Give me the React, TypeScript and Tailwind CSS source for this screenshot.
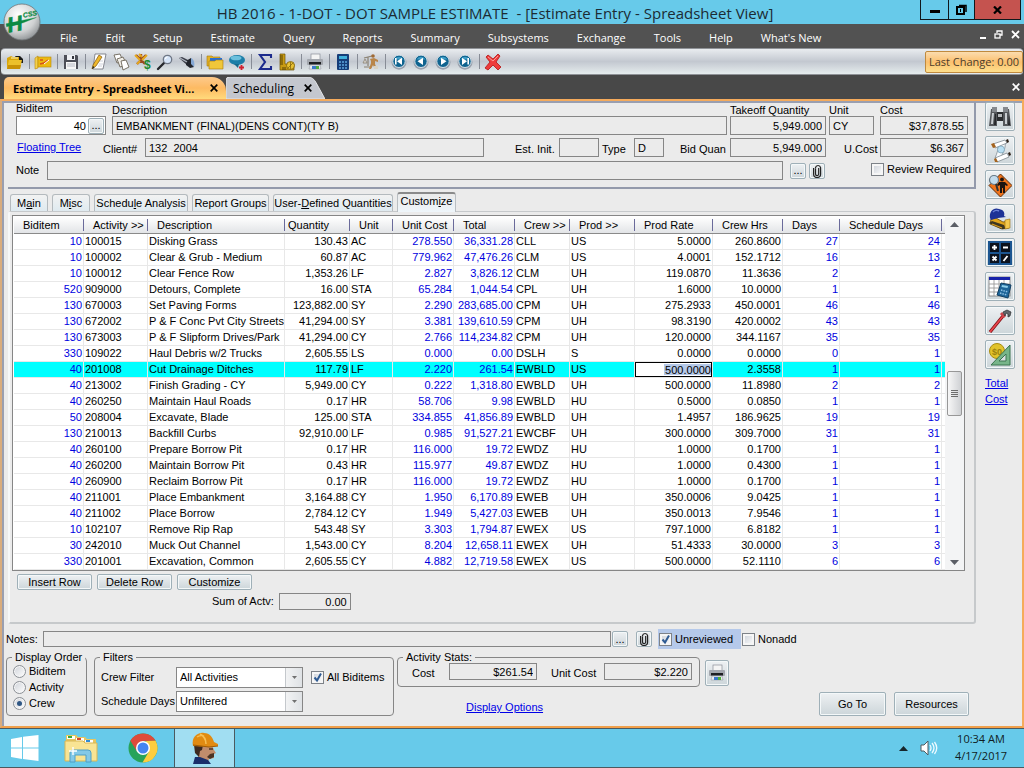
import React from "react";

type Kids = { children: React.ReactNode };

/* ---------- small drawing helper ---------- */

function Pic({ size = 18, box = 18, children }: Kids & { size?: number; box?: number }) {
  return (
    <svg width={size} height={size} viewBox={`0 0 ${box} ${box}`} aria-hidden="true" className="shrink-0">
      {children}
    </svg>
  );
}

function Clip() {
  return (
    <svg width="10" height="14" viewBox="0 0 10 14" fill="none" stroke="#222" strokeWidth="1.2" aria-hidden="true">
      <path d="M6.7 4v6a1.6 1.6 0 0 1-3.2 0V4.4" />
      <path d="M1.6 4v6a3.5 3.5 0 0 0 7 0V3.6a2.6 2.6 0 0 0-5.1 0v1" />
    </svg>
  );
}

const folder = (
  <Pic>
    <path d="M9 3h5l3 3v4h-3z" fill="#1b1b1b" />
    <path d="M1 5l4-2 2 1h6v12H1z" fill="#d9a50a" />
    <path d="M1 16L3 7h13l-2 9z" fill="#ecc02a" />
    <path d="M1 16l1-4h13l-1 4z" fill="#c99206" />
    <path d="M5 5h7" stroke="#f8e7a0" strokeWidth="1.200" />
  </Pic>
);
const yellowBook = (
  <Pic>
    <path d="M1 5l3-2v12l-3 1z" fill="#f2d14e" stroke="#b8860b" strokeWidth=".6" />
    <rect x="4" y="4" width="13" height="10" fill="#ecb913" stroke="#b98a09" strokeWidth=".6" />
    <path d="M6 7h3M6 11l4-1 4-3" stroke="#d8501b" strokeWidth="1.4" fill="none" />
    <path d="M10 11l5-4" stroke="#fff" strokeWidth="1" />
  </Pic>
);
const floppy = (
  <Pic>
    <path d="M2 2h13l1 1v13H2z" fill="#4d4f58" />
    <rect x="5" y="2" width="8" height="5" fill="#eef0f4" />
    <rect x="10" y="3" width="2" height="3" fill="#34363e" />
    <rect x="4" y="9" width="10" height="7" fill="#f7f7f7" />
    <path d="M5 11h8M5 13h8" stroke="#b6bac4" strokeWidth="1" />
  </Pic>
);
const pencilPage = (
  <Pic>
    <path d="M5 1h11l-3 15H3z" fill="#fff" stroke="#6c6f78" strokeWidth=".8" />
    <path d="M9 8h4M9 11h4M8 13h4" stroke="#c3c7d2" strokeWidth=".8" />
    <path d="M9 2l3 2-6 9-4 3 1-4z" fill="#efb82b" stroke="#80560d" strokeWidth=".7" />
    <path d="M2 16l1-3 1.600 1.200z" fill="#222" />
  </Pic>
);
const copies = (
  <Pic>
    <path d="M2 2l6-1 3 7-6 2z" fill="#fff" stroke="#6b6457" strokeWidth=".9" />
    <path d="M5 6l6-2 4 8-7 2z" fill="#f1eee8" stroke="#6b6457" strokeWidth=".9" />
    <path d="M9 8l5-1 3 7-6 3z" fill="#fff" stroke="#6b6457" strokeWidth=".9" />
  </Pic>
);
const toolsDollar = (
  <Pic>
    <path d="M2 2l9 9M12 2L3 11M7 1v9" stroke="#9a4a22" strokeWidth="2.4" />
    <path d="M1 2l5 5M13 2L8 7M5 1l3 3M3 11l3-3" stroke="#e6a91f" strokeWidth="1.900" />
    <text x="10" y="16" fontSize="12" fontWeight="700" fill="#1b8a2f" fontFamily="Liberation Sans, sans-serif">$</text>
  </Pic>
);
const magnifier = (
  <Pic>
    <path d="M2 16l6-6" stroke="#26282e" strokeWidth="2.4" strokeLinecap="round" />
    <circle cx="11.500" cy="6.500" r="4.200" fill="#d5e4f8" stroke="#6f7785" strokeWidth="1.300" />
    <path d="M9.500 6a2 2 0 0 1 2-2" stroke="#fff" strokeWidth="1.100" fill="none" />
  </Pic>
);
const flashlight = (
  <Pic>
    <path d="M1 5l3-1 8 4-3 4z" fill="#3a3d47" />
    <path d="M8 8l5-3 3 9-4 1-4-3z" fill="#22252d" />
    <path d="M13 5c3 1 4 6 3 9l-3-3z" fill="#86a9d6" />
    <path d="M2 5l7 4" stroke="#b2b8c4" strokeWidth="1.200" />
  </Pic>
);
const folders = (
  <Pic>
    <path d="M1 3h5l1 1h7v9H1z" fill="#e3b124" stroke="#a77a0a" strokeWidth=".6" />
    <path d="M4 5h12v3H4z" fill="#2c6fd0" />
    <path d="M3 8h6l1-1h7v9H3z" fill="#f0c73a" stroke="#a77a0a" strokeWidth=".6" />
  </Pic>
);
const balloon = (
  <Pic>
    <ellipse cx="9" cy="7" rx="8" ry="5" fill="#1c7ea8" />
    <ellipse cx="8" cy="5" rx="5.500" ry="2.300" fill="#6cc0dd" />
    <path d="M6 11h5l-1 4z" fill="#16698d" />
    <path d="M13.500 12v5M11 14.500h5" stroke="#d1202f" strokeWidth="1.800" />
  </Pic>
);
const sigma = (
  <Pic>
    <path d="M15 5V2H4l5 7-5 7h11v-3" fill="none" stroke="#1c2b8d" strokeWidth="2.100" />
  </Pic>
);
const ruler = (
  <Pic>
    <path d="M2 1h5v10h9v6H2z" fill="#c99b12" stroke="#6e5406" strokeWidth=".7" />
    <path d="M2 3h3M2 5h3M2 7h3M2 9h3M2 11h3M5 17v-3M7 17v-3" stroke="#4a3903" strokeWidth=".9" />
    <circle cx="12.500" cy="12.500" r="4" fill="#e7c133" stroke="#7a5d07" strokeWidth=".8" />
    <path d="M10 15l5-5M12.500 9v7" stroke="#7a5d07" strokeWidth=".7" />
  </Pic>
);
const printer = (
  <Pic>
    <rect x="5" y="1" width="9" height="6" fill="#f4f4f4" stroke="#8b8f98" strokeWidth=".7" />
    <rect x="1" y="6" width="16" height="6" rx="1" fill="#a3a7ae" />
    <rect x="3" y="9" width="12" height="2.500" fill="#1d1e21" />
    <path d="M4 12h10l1 4H3z" fill="#e9ecf0" stroke="#8b8f98" strokeWidth=".5" />
    <rect x="6" y="13" width="4" height="3" fill="#3a78c9" />
    <rect x="10" y="13" width="3" height="3" fill="#4fae3c" />
  </Pic>
);
const calculator = (
  <Pic>
    <rect x="3" y="1" width="12" height="16" rx="1" fill="#163d78" />
    <rect x="5" y="3" width="8" height="3" fill="#3fb0dc" />
    <path d="M5 9h2M8 9h2M11 9h2M5 12h2M8 12h2M11 12h2M5 15h2M8 15h2M11 15h2" stroke="#5da5dd" strokeWidth="1.700" />
  </Pic>
);
const scale = (
  <Pic>
    <path d="M2 5l8-2M6 4v9M2 14h8" stroke="#8a8172" strokeWidth="1.200" />
    <path d="M1 10l2-4 2 4z" fill="#d9d6cf" stroke="#8a8172" strokeWidth=".8" />
    <circle cx="11" cy="3" r="1.800" fill="#a06a35" />
    <path d="M8 6l4-1 4 2v2l-3-1v3l2 5h-2l-2-4-2 4H7l2-6V8z" fill="#b98549" />
    <path d="M12 13h4v3h-4z" fill="#d8d2c4" />
  </Pic>
);
const redX = (
  <Pic>
    <path d="M2 4l2-2 5 4 5-5 2 2-4 6 5 5-3 3-5-5-5 5-3-2 5-6z" fill="#ee3c3c" stroke="#b41414" strokeWidth=".8" />
    <path d="M4 4l5 4 5-5" stroke="#ff9a94" strokeWidth="1" fill="none" />
  </Pic>
);

function Nav({ glyph }: { glyph: string }) {
  return (
    <Pic>
      <ellipse cx="9" cy="9.500" rx="7.500" ry="7.200" fill="#9aa2ae" />
      <circle cx="9" cy="8.300" r="6.200" fill="#0f638f" stroke="#e3ecf2" strokeWidth=".9" />
      <path d="M4.500 6.500a5 5 0 0 1 9 0z" fill="#3d9cc6" />
      <path d={glyph} fill="#fff" />
    </Pic>
  );
}

type Tool = { name: string; icon: React.ReactNode } | null;
const tools: Tool[] = [
  { name: "Open", icon: folder },
  null,
  { name: "Estimate book", icon: yellowBook },
  null,
  { name: "Save", icon: floppy },
  null,
  { name: "Edit", icon: pencilPage },
  { name: "Copy", icon: copies },
  { name: "Cost tools", icon: toolsDollar },
  { name: "Find", icon: magnifier },
  { name: "Search", icon: flashlight },
  null,
  { name: "Folders", icon: folders },
  { name: "Notes", icon: balloon },
  null,
  { name: "Sum", icon: sigma },
  { name: "Takeoff", icon: ruler },
  null,
  { name: "Print", icon: printer },
  null,
  { name: "Calculator", icon: calculator },
  null,
  { name: "Balance", icon: scale },
  null,
  { name: "First", icon: <Nav glyph="M5 5h1.600v6.500H5zM7 8.300l5-3.600v7.200z" /> },
  { name: "Previous", icon: <Nav glyph="M5.500 8.300l5.500-3.600v7.200z" /> },
  { name: "Next", icon: <Nav glyph="M12.500 8.300L7 4.700v7.200z" /> },
  { name: "Last", icon: <Nav glyph="M13 5h-1.600v6.500H13zM11 8.300L6 4.700v7.200z" /> },
  null,
  { name: "Close", icon: redX },
];

const sideTools: { name: string; icon: React.ReactNode }[] = [
  {
    name: "Find",
    icon: (
      <Pic size={24} box={24}>
        <path d="M3 4h6v4h6V4h6l2 17h-8v-6H9v6H1z" fill="#55585c" />
        <path d="M4 2h5v5H4zM15 2h5v5h-5z" fill="#85898e" />
        <path d="M4 8l-1 11h2l1-11zM17 8v11h2V8z" fill="#c9cdd1" />
        <path d="M7 9h1v11H6zM21 10l1 10h-2z" fill="#25272a" />
        <path d="M9 7h6v9H9z" fill="#2b2d30" />
        <path d="M10 9h4v3h-4z" fill="#b7babd" />
      </Pic>
    ),
  },
  {
    name: "Plans",
    icon: (
      <Pic size={24} box={24}>
        <path d="M9 5l8-2c1 5-1 9-4 15l-6 1c2-5 4-9 2-14z" fill="#f7fbfd" stroke="#7d888f" strokeWidth=".8" />
        <path d="M5 5l12-4 2 3L7 9z" fill="#fff" stroke="#7d888f" strokeWidth=".8" />
        <path d="M7 19l12-5 2 4L9 23z" fill="#fff" stroke="#7d888f" strokeWidth=".8" />
        <path d="M3 5l3-1 2 4-3 1z" fill="#a5641f" />
        <path d="M6 20l2-1 2 4-3 0z" fill="#a5641f" />
        <path d="M18 1l2-1 1 3-2 1zM20 14l2-1 1 3-2 1z" fill="#2d2117" />
        <circle cx="13" cy="10.500" r="3.500" fill="#b9dff3" stroke="#7fa6ba" strokeWidth=".8" />
      </Pic>
    ),
  },
  {
    name: "Crew lookup",
    icon: (
      <Pic size={24} box={24}>
        <path d="M12.500 1L24 12.500 12.500 24 1 12.500z" fill="#f0731a" stroke="#5c2d0b" strokeWidth="1" />
        <circle cx="14" cy="6.500" r="1.900" fill="#1d1410" />
        <path d="M11 9h6l3 3-1 1-2-1v8h-2v-5h-1v5h-2v-8l-2 1-1-1z" fill="#1d1410" />
        <circle cx="6" cy="7" r="4.500" fill="#c3dced" stroke="#677986" strokeWidth="1.200" />
        <path d="M8 11l2 7" stroke="#333" strokeWidth="2" />
      </Pic>
    ),
  },
  {
    name: "Equipment",
    icon: (
      <Pic size={24} box={24}>
        <path d="M3 12l5-1 7 4 6-1v7l-7 1-12-5z" fill="#e2a51a" stroke="#6b4b08" strokeWidth=".8" />
        <path d="M1 16l12 6h5l-2-4-12-4z" fill="#3d3620" />
        <path d="M4 17l10 4" stroke="#d79b1b" strokeWidth="1.200" />
        <path d="M17 13l5-1v9l-5 1z" fill="#f4c94e" stroke="#9a7110" strokeWidth=".6" />
        <path d="M2 11C1 4 6 0 11 2c5 1 6 4 5 7l2 1-8 1-7 2z" fill="#1e3296" />
        <path d="M5 5c2-2 4-2 6-1" stroke="#6c80d8" strokeWidth="1.400" fill="none" />
      </Pic>
    ),
  },
  {
    name: "Operators",
    icon: (
      <Pic size={24} box={24}>
        <rect x="0" y="0" width="24" height="24" fill="#1c5590" />
        <path d="M2 2h9v9H2zM13 2h9v9h-9zM2 13h9v9H2zM13 13h9v9h-9z" fill="#0c121d" />
        <path d="M6.500 4v5M4 6.500h5M15 6.500h5M4.500 15.500l4 4M8.500 15.500l-4 4M19.500 15l-4 5" stroke="#fff" strokeWidth="1.800" />
      </Pic>
    ),
  },
  {
    name: "Spreadsheet calculator",
    icon: (
      <Pic size={24} box={24}>
        <rect x="1" y="2" width="21" height="19" fill="#fff" stroke="#777" strokeWidth=".8" />
        <rect x="1" y="2" width="21" height="3" fill="#1722a8" />
        <path d="M1 9h21M1 13h21M1 17h21M6 5v16M11 5v16M16 5v16" stroke="#9a9a9a" strokeWidth=".9" />
        <path d="M13 8l10 2-3 13-11-3z" fill="#1e6599" stroke="#123f62" />
        <path d="M14 10l6 1-.5 2-6-1z" fill="#8fd0ec" />
        <path d="M13 15l7 2M12 18l7 2" stroke="#8fc1e4" strokeWidth="1.500" strokeDasharray="1.500 1" />
      </Pic>
    ),
  },
  {
    name: "Wrench",
    icon: (
      <Pic size={24} box={24}>
        <path d="M2 23L15 7" stroke="#7a0d12" strokeWidth="3.200" />
        <path d="M2 23L15 7" stroke="#e9444b" strokeWidth="1.800" />
        <path d="M13 4l4 4" stroke="#c9444b" strokeWidth="3" />
        <path d="M15 3l4-2 4 2-1 4-2 1 0-3-2-1-1 3z" fill="#63676b" stroke="#2a2c2e" strokeWidth=".7" />
      </Pic>
    ),
  },
  {
    name: "Cost and takeoff",
    icon: (
      <Pic size={24} box={24}>
        <circle cx="9" cy="8" r="7.500" fill="#e1c32b" stroke="#a88d10" />
        <text x="4" y="12" fontSize="9" fontWeight="700" fill="#9b820e" fontFamily="Liberation Sans, sans-serif">$0</text>
        <path d="M22 2v20H3zM18 11v7h-7z" fill="#77b58a" fillRule="evenodd" stroke="#3c7550" strokeWidth="1" />
      </Pic>
    ),
  },
];

/* ---------- form controls ---------- */

const glossy = "border border-[#9fb0b8] rounded-[2px] bg-linear-to-b from-[#eef1f3] via-[#dde3e6] to-[#cdd6da] shadow-[inset_0_0_0_1px_#f4f8f9] hover:to-[#e6edf0]";

function Field({ id, label, value = "", className }: { id?: string; label?: string; value?: string; className: string }) {
  return (
    <input
      id={id}
      aria-label={label}
      readOnly
      defaultValue={value}
      className={`min-w-0 border border-[#868686] bg-[#ebebeb] px-[3px] ${className}`}
    />
  );
}

function Check({ label, checked = false }: { label: string; checked?: boolean }) {
  return (
    <label className="flex items-center gap-[3px] whitespace-nowrap">
      <span className="relative block size-[13px]">
        <input
          type="checkbox"
          defaultChecked={checked}
          className="peer block size-[13px] appearance-none border border-[#7d8288] bg-linear-to-br from-[#c9ced6] to-white shadow-[inset_0_0_0_2px_#f6f6f6]"
        />
        <svg viewBox="0 0 13 13" className="pointer-events-none absolute inset-0 size-[13px] opacity-0 peer-checked:opacity-100" aria-hidden="true">
          <path d="M3.500 6.500l2.500 3 4-7" fill="none" stroke="#2f5b93" strokeWidth="2" />
        </svg>
      </span>
      {label}
    </label>
  );
}

function Radio({ label, checked = false }: { label: string; checked?: boolean }) {
  return (
    <label className="flex h-4 items-center gap-[3px]">
      <span className="relative block size-[13px]">
        <input
          type="radio"
          name="order"
          defaultChecked={checked}
          className="peer block size-[13px] appearance-none rounded-full border border-[#8b9096] bg-linear-to-br from-[#cfd3d9] to-white shadow-[inset_0_0_0_1px_#f6f6f6]"
        />
        <span className="pointer-events-none absolute inset-1 rounded-full bg-[#2f5784] opacity-0 peer-checked:opacity-100" />
      </span>
      {label}
    </label>
  );
}

function Choice({ id, value }: { id: string; value: string }) {
  return (
    <span className="relative block h-[21px] w-[127px]">
      <select id={id} className="block h-full w-full appearance-none border border-[#868686] bg-white px-[3px]">
        <option>{value}</option>
      </select>
      <span className="pointer-events-none absolute inset-y-px right-px flex w-[17px] items-center justify-center border-l border-[#c4c8cc] bg-linear-to-r from-[#f2f3f4] to-[#dfe2e5]">
        <svg width="5" height="3" viewBox="0 0 5 3" aria-hidden="true">
          <path d="M0 0h5L2.500 3z" fill="#707070" />
        </svg>
      </span>
    </span>
  );
}

function SmallButton({ label, children }: Kids & { label: string }) {
  return (
    <button aria-label={label} className={`flex h-4 w-4 shrink-0 items-center justify-center ${glossy}`}>
      {children}
    </button>
  );
}

function Group({ title, className, children }: Kids & { title: string; className: string }) {
  return (
    <fieldset className={`min-w-0 rounded-[4px] border border-[#868686] ${className}`}>
      <legend className="ml-[5px] h-[11px] px-[3px] leading-[11px] whitespace-nowrap">{title}</legend>
      {children}
    </fieldset>
  );
}

/* ---------- data ---------- */

const columns: { title: string; width: string; pad: string; align: string; blue?: boolean }[] = [
  { title: "Biditem", width: "w-[70px]", pad: "pl-[9px]", align: "text-right", blue: true },
  { title: "Activity >>", width: "w-[64px]", pad: "pl-[9px]", align: "text-left" },
  { title: "Description", width: "w-[137px]", pad: "pl-[9px]", align: "text-left" },
  { title: "Quantity", width: "w-[65px]", pad: "pl-[3px]", align: "text-right" },
  { title: "Unit", width: "w-[43px]", pad: "pl-[9px]", align: "text-left" },
  { title: "Unit Cost", width: "w-[61px]", pad: "pl-[9px]", align: "text-right", blue: true },
  { title: "Total", width: "w-[61px]", pad: "pl-[9px]", align: "text-right", blue: true },
  { title: "Crew >>", width: "w-[55px]", pad: "pl-[9px]", align: "text-left" },
  { title: "Prod >>", width: "w-[65px]", pad: "pl-[9px]", align: "text-left" },
  { title: "Prod Rate", width: "w-[78px]", pad: "pl-[9px]", align: "text-right" },
  { title: "Crew Hrs", width: "w-[70px]", pad: "pl-[9px]", align: "text-right" },
  { title: "Days", width: "w-[57px]", pad: "pl-[9px]", align: "text-right", blue: true },
  { title: "Schedule Days", width: "w-[102px]", pad: "pl-[9px]", align: "text-right", blue: true },
];

const rows = [
  "10|100015|Disking Grass|130.43|AC|278.550|36,331.28|CLL|US|5.0000|260.8600|27|24",
  "10|100002|Clear & Grub - Medium|60.87|AC|779.962|47,476.26|CLM|US|4.0001|152.1712|16|13",
  "10|100012|Clear Fence Row|1,353.26|LF|2.827|3,826.12|CLM|UH|119.0870|11.3636|2|2",
  "520|909000|Detours, Complete|16.00|STA|65.284|1,044.54|CPL|UH|1.6000|10.0000|1|1",
  "130|670003|Set Paving Forms|123,882.00|SY|2.290|283,685.00|CPM|UH|275.2933|450.0001|46|46",
  "130|672002|P & F Conc Pvt City Streets|41,294.00|SY|3.381|139,610.59|CPM|UH|98.3190|420.0002|43|43",
  "130|673003|P & F Slipform Drives/Park|41,294.00|CY|2.766|114,234.82|CPM|UH|120.0000|344.1167|35|35",
  "330|109022|Haul Debris w/2 Trucks|2,605.55|LS|0.000|0.00|DSLH|S|0.0000|0.0000|0|1",
  "40|201008|Cut Drainage Ditches|117.79|LF|2.220|261.54|EWBLD|US|500.0000|2.3558|1|1",
  "40|213002|Finish Grading - CY|5,949.00|CY|0.222|1,318.80|EWBLD|UH|500.0000|11.8980|2|2",
  "40|260250|Maintain Haul Roads|0.17|HR|58.706|9.98|EWBLD|HU|0.5000|0.0850|1|1",
  "50|208004|Excavate, Blade|125.00|STA|334.855|41,856.89|EWBLD|UH|1.4957|186.9625|19|19",
  "130|210013|Backfill Curbs|92,910.00|LF|0.985|91,527.21|EWCBF|UH|300.0000|309.7000|31|31",
  "40|260100|Prepare Borrow Pit|0.17|HR|116.000|19.72|EWDZ|HU|1.0000|0.1700|1|1",
  "40|260200|Maintain Borrow Pit|0.43|HR|115.977|49.87|EWDZ|HU|1.0000|0.4300|1|1",
  "40|260900|Reclaim Borrow Pit|0.17|HR|116.000|19.72|EWDZ|HU|1.0000|0.1700|1|1",
  "40|211001|Place Embankment|3,164.88|CY|1.950|6,170.89|EWEB|UH|350.0006|9.0425|1|1",
  "40|211002|Place Borrow|2,784.12|CY|1.949|5,427.03|EWEB|UH|350.0013|7.9546|1|1",
  "10|102107|Remove Rip Rap|543.48|SY|3.303|1,794.87|EWEX|US|797.1000|6.8182|1|1",
  "30|242010|Muck Out Channel|1,543.00|CY|8.204|12,658.11|EWEX|UH|51.4333|30.0000|3|3",
  "330|201001|Excavation, Common|2,605.55|CY|4.882|12,719.58|EWEX|US|500.0000|52.1110|6|6",
].map((r) => r.split("|"));

const menus = ["File", "Edit", "Setup", "Estimate", "Query", "Reports", "Summary", "Subsystems", "Exchange", "Tools", "Help", "What's New"];

/* ---------- page sections ---------- */

function TitleBar() {
  return (
    <header className="relative">
      <div className="flex h-6 items-start bg-[#67caea]">
        <h1 className="flex-1 pl-[70px] text-center font-['Open_Sans','Noto_Sans',sans-serif] text-[15px] leading-[27px] whitespace-pre text-[#1c2b33]">
          HB 2016 - 1-DOT - DOT SAMPLE ESTIMATE  - [Estimate Entry - Spreadsheet View]
        </h1>
        <div className="mr-[3px] flex h-5 border border-t-0 border-[#10181c]">
          <button aria-label="Minimize" className="flex w-[27px] items-center justify-center pt-[3px]">
            <span className="h-[3px] w-[10px] bg-black" />
          </button>
          <button aria-label="Restore" className="flex w-[27px] items-center justify-center border-x border-[#10181c]">
            <svg width="11" height="11" viewBox="0 0 11 11" fill="none" stroke="#000" aria-hidden="true">
              <path d="M3 1.500h7V8" strokeWidth="1.500" />
              <rect x="1" y="3" width="7" height="7" strokeWidth="2" />
              <path d="M4.500 5v3" strokeWidth="1" />
            </svg>
          </button>
          <button aria-label="Close window" className="flex w-[45px] items-center justify-center bg-[#c5534f]">
            <svg width="9" height="8" viewBox="0 0 9 8" stroke="#000" strokeWidth="2.200" aria-hidden="true">
              <path d="M1 .5l7 7M8 .5l-7 7" />
            </svg>
          </button>
        </div>
      </div>
      <nav className="flex h-6 items-center bg-[#525252] pl-[46px] font-['Open_Sans','Noto_Sans',sans-serif] text-[11px] text-white">
        {menus.map((m) => (
          <button key={m} className="px-[14px] pt-[2px] whitespace-nowrap">
            {m}
          </button>
        ))}
        <div className="ml-auto flex items-center gap-2 pr-1 pb-1">
          <button aria-label="Minimize document" className="mt-2 h-[2px] w-[6px] bg-white" />
          <button aria-label="Restore document">
            <svg width="9" height="9" viewBox="0 0 9 9" fill="none" stroke="#fff" aria-hidden="true">
              <path d="M3 3V1h5v4H6" strokeWidth="1.300" />
              <rect x="1" y="4" width="5" height="4" strokeWidth="1.300" />
            </svg>
          </button>
          <button aria-label="Close document">
            <svg width="9" height="9" viewBox="0 0 9 9" stroke="#fff" strokeWidth="1.800" aria-hidden="true">
              <path d="M1 1l7 7M8 1L1 8" />
            </svg>
          </button>
        </div>
      </nav>
      <svg width="38" height="38" viewBox="0 0 38 38" className="absolute top-[3px] left-[3px]" role="img" aria-label="HCSS">
        <defs>
          <radialGradient id="ball" cx=".4" cy=".3" r=".8">
            <stop offset="0" stopColor="#ffffff" />
            <stop offset=".6" stopColor="#cfd1d2" />
            <stop offset="1" stopColor="#7f8386" />
          </radialGradient>
        </defs>
        <circle cx="19" cy="19" r="18" fill="url(#ball)" stroke="#6e7376" strokeWidth=".8" />
        <g transform="rotate(-10 19 19)" fill="#0c8a43" stroke="#0c8a43" fontFamily="Liberation Sans, sans-serif" fontWeight="700" fontStyle="italic">
          <text x="4" y="27" fontSize="21" strokeWidth=".7">H</text>
          <text x="21" y="15" fontSize="7" strokeWidth=".2">CSS</text>
          <path d="M3 18l31-1-14 3-17 1z" strokeWidth=".3" />
        </g>
      </svg>
    </header>
  );
}

function Toolbar() {
  return (
    <div className="bg-[#4a4a4a] px-px">
      <div className="flex h-[27px] items-center rounded-[4px] border-y border-[#8f9297] bg-linear-to-b from-[#e9ecef] via-[#c3c8d0] to-[#e6edee] pl-[3px]">
        {tools.map((t, i) =>
          t ? (
            <button key={i} aria-label={t.name} className="flex w-[22px] shrink-0 justify-center">
              {t.icon}
            </button>
          ) : (
            <span key={i} className="flex w-[6px] shrink-0 justify-center">
              <span className="h-[15px] w-px bg-[#878c96]" />
            </span>
          ),
        )}
        <button className="ml-auto h-[22px] rounded-[2px] border border-[#c08a3e] bg-linear-to-b from-[#fbdcae] via-[#fbc06e] to-[#fee08d] px-[3px] font-['Open_Sans','Noto_Sans',sans-serif] text-[11px] whitespace-nowrap text-[#4a3c2a]">
          Last Change: 0.00
        </button>
      </div>
    </div>
  );
}

function CloseMark({ label, light = false }: { label: string; light?: boolean }) {
  return (
    <button aria-label={label} className={light ? "text-white" : "text-black"}>
      <svg width="8" height="8" viewBox="0 0 8 8" stroke="currentColor" strokeWidth="1.700" aria-hidden="true">
        <path d="M.7.7l6.600 6.600M7.300.7L.7 7.300" />
      </svg>
    </button>
  );
}

function DocumentTabs() {
  return (
    <div className="flex h-6 items-end bg-[#484848] px-1 font-['Open_Sans','Noto_Sans',sans-serif] text-[12px]">
      <div className="z-10 flex h-[22px] w-[222px] items-center justify-between rounded-t-[5px] rounded-tr-[14px] bg-linear-to-b from-[#fdc98a] via-[#fdba62] to-[#ffda7c] pr-2 pl-[9px]">
        <button className="text-[11px] font-bold whitespace-nowrap">Estimate Entry - Spreadsheet Vi...</button>
        <CloseMark label="Close Estimate Entry" />
      </div>
      <div className="relative flex h-[22px] w-[99px] items-center justify-between pr-[13px] pl-[7px]">
        <svg viewBox="0 0 102 22" preserveAspectRatio="none" className="absolute inset-0 h-full w-full" aria-hidden="true">
          <path d="M0 22V3Q0 0 4 0H84Q90 0 93 6L102 22z" fill="#c4c7ce" stroke="#e4e6e9" strokeWidth="1" />
        </svg>
        <button className="relative">Scheduling</button>
        <span className="relative flex">
          <CloseMark label="Close Scheduling" />
        </span>
      </div>
      <div className="ml-auto flex h-6 items-center">
        <CloseMark label="Close view" light />
      </div>
    </div>
  );
}

function BiditemPanel() {
  return (
    <section className="border-r-2 border-b-2 border-[#949aab] pr-[6px] pb-[7px] pl-2">
      <div className="flex">
        <div className="w-[90px]">
          <label htmlFor="biditem" className="block h-[14px] leading-[13px]">Biditem</label>
          <div className="flex h-[19px] items-center border border-[#868686] bg-white pr-px">
            <input id="biditem" defaultValue="40" className="h-full w-0 flex-1 pr-[2px] text-right" />
            <SmallButton label="Pick biditem">...</SmallButton>
          </div>
        </div>
        <div className="ml-[6px] min-w-0 flex-1">
          <label htmlFor="desc" className="block h-[14px] leading-4">Description</label>
          <Field id="desc" value="EMBANKMENT (FINAL)(DENS CONT)(TY B)" className="block h-[19px] w-full" />
        </div>
        <div className="ml-[3px] w-[96px]">
          <label htmlFor="takeoff" className="block h-[14px] leading-4">Takeoff Quantity</label>
          <Field id="takeoff" value="5,949.000" className="block h-[19px] w-full text-right" />
        </div>
        <div className="ml-[3px] w-[45px]">
          <label htmlFor="unit" className="block h-[14px] leading-4">Unit</label>
          <Field id="unit" value="CY" className="block h-[19px] w-full" />
        </div>
        <div className="ml-[6px] w-[88px]">
          <label htmlFor="cost" className="block h-[14px] leading-4">Cost</label>
          <Field id="cost" value="$37,878.55" className="block h-[19px] w-full text-right" />
        </div>
      </div>
      <div className="mt-[3px] flex h-[19px] items-center">
        <a href="#tree" className="w-[87px] pl-px text-[#0000e8] underline">Floating Tree</a>
        <label htmlFor="client" className="w-[42px] pt-1">Client#</label>
        <Field id="client" value="132  2004" className="h-full flex-1" />
        <label htmlFor="init" className="w-[75px] pt-1 pl-[31px]">Est. Init.</label>
        <Field id="init" className="h-full w-10" />
        <label htmlFor="type" className="w-[35px] pt-1 pl-[3px]">Type</label>
        <Field id="type" value="D" className="h-full w-[30px]" />
        <label htmlFor="quan" className="w-[66px] pt-1 pl-4">Bid Quan</label>
        <Field id="quan" value="5,949.000" className="h-full w-[96px] text-right" />
        <label htmlFor="ucost" className="w-[54px] pt-1 pl-[18px]">U.Cost</label>
        <Field id="ucost" value="$6.367" className="h-full w-[88px] text-right" />
      </div>
      <div className="mt-1 flex h-[19px] items-center">
        <label htmlFor="note" className="w-[31px]">Note</label>
        <Field id="note" className="h-full flex-1" />
        <div className="flex w-[88px] gap-[3px] pl-[7px]">
          <SmallButton label="Edit note">...</SmallButton>
          <SmallButton label="Attach to note"><Clip /></SmallButton>
        </div>
        <div className="w-[97px] pb-[2px]">
          <Check label="Review Required" />
        </div>
      </div>
    </section>
  );
}

const pages: { before: string; key: string; after: string; width: string }[] = [
  { before: "M", key: "a", after: "in", width: "w-[38px]" },
  { before: "M", key: "i", after: "sc", width: "w-[38px]" },
  { before: "Schedu", key: "l", after: "e Analysis", width: "w-[94px]" },
  { before: "Report Groups", key: "", after: "", width: "w-[77px]" },
  { before: "User-", key: "D", after: "efined Quantities", width: "w-[120px]" },
  { before: "Custom", key: "i", after: "ze", width: "w-[59px]" },
];

function PageTabs() {
  return (
    <div role="tablist" className="mt-[3px] flex items-end gap-1 pl-[2px]">
      {pages.map((p, i) => {
        const on = i === pages.length - 1;
        return (
          <button
            key={p.before + p.key}
            role="tab"
            aria-selected={on}
            className={`rounded-t-[3px] border border-b-0 whitespace-nowrap ${p.width} ${
              on
                ? "z-10 -mb-px h-5 border-[#b9bec2] border-t-2 border-t-[#8a8a8a] bg-linear-to-b from-[#ebebeb] to-[#eef5fa] pb-[3px]"
                : "h-[17px] border-[#b4babe] bg-linear-to-b from-[#f2f2f2] to-[#dfeaf0]"
            }`}
          >
            {p.before}
            <span className="underline">{p.key}</span>
            {p.after}
          </button>
        );
      })}
    </div>
  );
}

function ActivityGrid() {
  return (
    <div className="mr-[9px] ml-[2px] flex border border-[#868686] bg-white p-px pr-0 pb-0">
      <div className="min-w-0 flex-1">
        <table className="w-full table-fixed border-separate border-spacing-0">
          <thead>
            <tr className="h-[17px]">
              {columns.map((c) => (
                <th
                  key={c.title}
                  className={`relative border-b border-[#8a8a8a] bg-linear-to-b from-white to-[#e2e4e7] p-0 text-left font-normal whitespace-nowrap ${c.width} ${c.pad}`}
                >
                  {c.title}
                  <span className="absolute top-[2px] right-0 h-[12px] w-px bg-[#6a6a9a]" />
                </th>
              ))}
              <th aria-label="End of columns" className="w-1 border-b border-[#8a8a8a] bg-linear-to-b from-white to-[#e2e4e7] p-0" />
            </tr>
          </thead>
          <tbody>
            {rows.map((r) => {
              const on = r[1] === "201008";
              return (
                <tr key={r[1]} className={`h-4 ${on ? "bg-[#00ffff]" : "bg-white"}`}>
                  {columns.map((c, i) => (
                    <td
                      key={c.title}
                      className={`overflow-hidden border-r border-b border-[#e8e8e8] p-0 whitespace-nowrap ${c.align} ${c.blue ? "text-[#0000e0]" : "text-black"} ${
                        on && i === 9 ? "" : c.align === "text-right" ? "pr-px" : "pl-px"
                      }`}
                    >
                      {on && i === 9 ? (
                        <span className="flex h-[15px] items-center border border-black bg-white">
                          <input
                            aria-label="Prod Rate"
                            defaultValue={r[i]}
                            className="ml-auto h-[11px] w-[47px] bg-[#b4c8e8] text-right leading-[11px]"
                          />
                        </span>
                      ) : (
                        <span className="block h-[15px] leading-[15px]">{r[i]}</span>
                      )}
                    </td>
                  ))}
                  <td className="border-r border-b border-[#e8e8e8] p-0" />
                </tr>
              );
            })}
          </tbody>
        </table>
      </div>
      <div className="flex w-[19px] shrink-0 flex-col items-center justify-between bg-[#f3f4f5] py-[5px]">
        <svg width="9" height="5" viewBox="0 0 9 5" aria-hidden="true"><path d="M0 5h9L4.500 0z" fill="#5b5e66" /></svg>
        <div className="flex h-[45px] w-[15px] flex-col items-center justify-center gap-px rounded-[2px] border border-[#979797] bg-linear-to-r from-[#f7f7f7] to-[#cfd1d4]">
          <span className="h-px w-[7px] bg-[#6d6d6d]" />
          <span className="h-px w-[7px] bg-[#6d6d6d]" />
          <span className="h-px w-[7px] bg-[#6d6d6d]" />
          <span className="h-px w-[7px] bg-[#6d6d6d]" />
        </div>
        <svg width="9" height="5" viewBox="0 0 9 5" aria-hidden="true"><path d="M0 0h9L4.500 5z" fill="#5b5e66" /></svg>
      </div>
    </div>
  );
}

function CustomizePage() {
  return (
    <div className="rounded-[3px] border-2 border-t border-[#c6c9cb] border-l-[#f6f8f9] pt-[3px] pb-3">
      <ActivityGrid />
      <div className="mt-[3px] flex gap-[5px] pl-[7px]">
        {["Insert Row", "Delete Row", "Customize"].map((b) => (
          <button key={b} className={`h-4 w-[75px] leading-[14px] ${glossy}`}>{b}</button>
        ))}
      </div>
      <div className="mt-[3px] flex items-center gap-[5px] pl-[202px]">
        <label htmlFor="sum">Sum of Actv:</label>
        <Field id="sum" value="0.00" className="h-[17px] w-[72px] text-right" />
      </div>
    </div>
  );
}

function SideTools() {
  return (
    <aside className="flex w-[44px] shrink-0 flex-col items-center gap-[5px] pl-[3px]">
      {sideTools.map((t) => (
        <button key={t.name} aria-label={t.name} className={`flex h-[29px] w-[30px] items-center justify-center ${glossy}`}>
          {t.icon}
        </button>
      ))}
      <a href="#total-cost" className="mt-px w-[29px] leading-4 text-[#0000e8] underline">Total Cost</a>
    </aside>
  );
}

function BottomPanel() {
  return (
    <section className="pt-[5px] pb-[9px]">
      <div className="flex items-center">
        <label htmlFor="notes" className="w-[37px]">Notes:</label>
        <Field id="notes" className="h-4 flex-1" />
        <div className="ml-px flex gap-2">
          <SmallButton label="Edit notes">...</SmallButton>
          <SmallButton label="Attach to notes"><Clip /></SmallButton>
        </div>
        <div className="ml-[6px] flex h-5 w-[83px] items-center bg-[#b5c9ea] pl-px">
          <Check label="Unreviewed" checked />
        </div>
        <div className="w-[279px] pl-px">
          <Check label="Nonadd" />
        </div>
      </div>
      <div className="mt-[3px] flex items-start">
        <Group title="Display Order" className="h-[64px] w-[81px]">
          <div className="flex flex-col pl-[6px]">
            <Radio label="Biditem" />
            <Radio label="Activity" />
            <Radio label="Crew" checked />
          </div>
        </Group>
        <Group title="Filters" className="ml-[7px] h-[64px] w-[300px]">
          <div className="mt-1 flex items-center pl-[6px]">
            <label htmlFor="crew" className="w-[75px]">Crew Filter</label>
            <Choice id="crew" value="All Activities" />
            <div className="ml-2"><Check label="All Biditems" checked /></div>
          </div>
          <div className="mt-[3px] flex items-center pl-[6px]">
            <label htmlFor="days" className="w-[75px] whitespace-nowrap">Schedule Days</label>
            <Choice id="days" value="Unfiltered" />
          </div>
        </Group>
        <div className="ml-[3px] flex flex-col items-start">
          <Group title="Activity Stats:" className="h-[35px] w-[303px]">
            <div className="flex items-center">
              <label htmlFor="acost" className="w-[51px] pt-1 pl-[14px]">Cost</label>
              <Field id="acost" value="$261.54" className="h-[17px] w-[88px] text-right" />
              <label htmlFor="aunit" className="w-[67px] pt-1 pl-[14px]">Unit Cost</label>
              <Field id="aunit" value="$2.220" className="h-[17px] w-[88px] text-right" />
            </div>
          </Group>
          <a href="#display" className="mt-[14px] ml-[69px] text-[#0000e8] underline">Display Options</a>
        </div>
        <button aria-label="Print activity" className={`mt-2 ml-[5px] flex h-[26px] w-6 items-center justify-center ${glossy}`}>
          {printer}
        </button>
        <div className="mt-10 mr-[51px] ml-auto flex gap-2">
          <button className={`h-6 w-[67px] ${glossy}`}>Go To</button>
          <button className={`h-6 w-[75px] ${glossy}`}>Resources</button>
        </div>
      </div>
    </section>
  );
}

function Taskbar() {
  return (
    <footer className="flex h-10 shrink-0 items-stretch border-y border-[#4b5a60] bg-[#67caea] font-['Open_Sans','Noto_Sans',sans-serif] text-[#101c22]">
      <button aria-label="Start" className="flex w-[50px] items-center justify-center">
        <svg width="28" height="26" viewBox="0 0 28 26" fill="#fff" aria-hidden="true">
          <path d="M0 4l11-2v10.500H0zM12 1.800L27.500 0v12.500H12zM0 13.500h11V24L0 22zM12 13.500h15.500V26L12 24z" />
        </svg>
      </button>
      <button aria-label="File Explorer" className="flex w-[62px] items-center justify-center">
        <svg width="34" height="30" viewBox="0 0 34 30" aria-hidden="true">
          <path d="M2 2h10l2 2h7l2 2h9v22H2z" fill="#e6c660" />
          <path d="M3 3h8v3H3z" fill="#fff" /><path d="M4 3h4v2H4z" fill="#35a83c" />
          <path d="M12 5h8v3h-8z" fill="#fff" /><path d="M13 5h4v2h-4z" fill="#d3472f" />
          <path d="M21 7h8v3h-8z" fill="#fff" /><path d="M22 7h4v2h-4z" fill="#2f8bd3" />
          <path d="M1 8h18l2 2h12v18H1z" fill="#f8e494" stroke="#d7b654" />
          <path d="M6 29V20q0-3 3-3h15q3 0 3 3v9h-5v-7H11v7z" fill="#83c9e8" stroke="#4f9fc6" />
          <path d="M9 14v8M5 18h8" stroke="#fff" strokeWidth="1.400" />
        </svg>
      </button>
      <button aria-label="Chrome" className="flex w-[62px] items-center justify-center">
        <svg width="30" height="30" viewBox="0 0 30 30" aria-hidden="true">
          <circle cx="15" cy="15" r="14.500" fill="#27a35a" />
          <path d="M15 15L2.400 7.800A14.500 14.500 0 0 1 27.600 7.800L15 8z" fill="#de4b3b" />
          <path d="M2.400 7.800L9 18.500 15 8z" fill="#de4b3b" />
          <path d="M27.600 7.800A14.500 14.500 0 0 1 14.500 29.500L21 18.500 18 8z" fill="#fccd3f" />
          <circle cx="15" cy="15" r="7" fill="#fff" />
          <circle cx="15" cy="15" r="5.500" fill="#4585f0" />
        </svg>
      </button>
      <button aria-label="HeavyBid" className="flex w-[61px] items-center justify-center border-x border-[#4b5a60] bg-[#a1def2]">
        <svg width="30" height="32" viewBox="0 0 30 32" aria-hidden="true">
          <path d="M6 13h16l2 5 2 3-2 1v4l-5 1-1 3-9-2z" fill="#c08d6c" />
          <path d="M4 13h9l-1 5-2 1-1 6-4-4z" fill="#3c2a20" />
          <path d="M20 22l4-1v4l-4 2-3-2z" fill="#4b3527" />
          <path d="M19 17h4" stroke="#2b1d15" strokeWidth="1.200" />
          <path d="M3 32l2-7 5 0 8 3 3 4z" fill="#192f6b" />
          <path d="M3 14C1 5 8 0 14 1c6 0 9 5 10 9l4 2v2l-9 1z" fill="#e18b12" />
          <path d="M10 2c4 2 6 6 6 10M7 5c3-2 5-2 7-1" stroke="#f7bf55" strokeWidth="1.500" fill="none" />
          <path d="M3 13l16 2 9-1" stroke="#9e5b07" fill="none" />
        </svg>
      </button>
      <div className="ml-auto flex items-center">
        <svg width="9" height="5" viewBox="0 0 9 5" aria-hidden="true"><path d="M0 5h9L4.500 0z" fill="#16262c" /></svg>
        <svg width="18" height="16" viewBox="0 0 18 16" className="ml-3" aria-hidden="true">
          <path d="M1 5h3l4-4v14l-4-4H1z" fill="#fff" stroke="#4e5a60" />
          <path d="M10 5q2 3 0 6M12 3q4 5 0 10M14.500 2q4.500 6 0 12" fill="none" stroke="#eefaff" strokeWidth="1.300" />
        </svg>
        <div className="w-[86px] pb-[3px] text-center text-[11px] leading-[17px]">
          <div>10:34 AM</div>
          <div>4/17/2017</div>
        </div>
      </div>
    </footer>
  );
}

export default function App() {
  return (
    <div className="flex min-h-screen flex-col bg-[#ebebeb] font-['Liberation_Sans',Arial,sans-serif] text-[11px] leading-[13px] text-black">
      <TitleBar />
      <Toolbar />
      <DocumentTabs />
      <main className="flex flex-1 flex-col border-2 border-[#f5ab5c] border-b-[#f0a04b] border-l-[#d9ac7d] px-[2px] pt-px shadow-[inset_1px_1px_0_1px_#9a9fb0]">
        <div className="flex items-start pl-1">
          <div className="min-w-0 flex-1">
            <BiditemPanel />
            <PageTabs />
            <CustomizePage />
          </div>
          <SideTools />
        </div>
        <div className="pl-[2px]">
          <BottomPanel />
        </div>
      </main>
      <Taskbar />
    </div>
  );
}
